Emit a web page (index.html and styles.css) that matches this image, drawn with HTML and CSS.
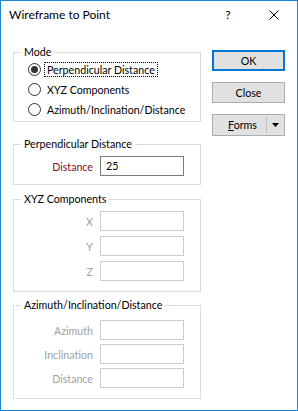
FILE: index.html
```html
<!DOCTYPE html>
<html lang="en">
<head>
    <meta charset="UTF-8">
    <title>Wireframe to Point</title>
    <link rel="stylesheet" href="styles.css">
</head>
<body>
    <div class="window">
        <div class="titlebar">
            <span class="title">Wireframe to Point</span>
            <span class="help">?</span>
            <span class="close">
                <svg width="10" height="10" viewBox="0 0 10 10"><path d="M0.5 0.5L9.5 9.5M9.5 0.5L0.5 9.5" stroke="#000" stroke-width="1"/></svg>
            </span>
        </div>

        <div class="content">
            <div class="groups">
                <fieldset class="group mode">
                    <legend>Mode</legend>
                    <div class="radio first"><span class="dot checked"></span><span class="caption focus">Perpendicular Distance</span></div>
                    <div class="radio"><span class="dot"></span><span class="caption">XYZ Components</span></div>
                    <div class="radio"><span class="dot"></span><span class="caption">Azimuth/Inclination/Distance</span></div>
                </fieldset>

                <fieldset class="group perp">
                    <legend>Perpendicular Distance</legend>
                    <div class="rows">
                        <div class="field"><span class="label required">Distance</span><span class="input">25</span></div>
                    </div>
                </fieldset>

                <fieldset class="group xyz">
                    <legend>XYZ Components</legend>
                    <div class="rows">
                        <div class="field"><span class="label">X</span><span class="input disabled"></span></div>
                        <div class="field"><span class="label">Y</span><span class="input disabled"></span></div>
                        <div class="field"><span class="label">Z</span><span class="input disabled"></span></div>
                    </div>
                </fieldset>

                <fieldset class="group aid">
                    <legend>Azimuth/Inclination/Distance</legend>
                    <div class="rows">
                        <div class="field"><span class="label">Azimuth</span><span class="input disabled"></span></div>
                        <div class="field"><span class="label">Inclination</span><span class="input disabled"></span></div>
                        <div class="field"><span class="label">Distance</span><span class="input disabled"></span></div>
                    </div>
                </fieldset>
            </div>

            <div class="buttons">
                <div class="btn default">OK</div>
                <div class="btn">Close</div>
                <div class="btn split">
                    <span class="main"><u>F</u>orms</span>
                    <span class="sep"></span>
                    <span class="drop">
                        <svg width="7" height="4" viewBox="0 0 7 4"><polygon points="0,0 7,0 3.5,4" fill="#000"/></svg>
                    </span>
                </div>
            </div>
        </div>
    </div>
</body>
</html>
```

FILE: styles.css
```css
* {
    box-sizing: border-box;
}

body {
    margin: 0;
    font-family: Lato, "Liberation Sans", sans-serif;
    font-size: 10.67px;
    color: #000;
    background: #fff;
}

.window {
    width: 298px;
    height: 411px;
    border: 1px solid #1883d7;
    background: #fff;
}

/* title bar */
.titlebar {
    height: 30px;
    display: flex;
    align-items: flex-start;
    font-size: 12px;
}
.title {
    flex: 1;
    margin: 6px 0 0 8px;
    line-height: 16px;
}
.help {
    width: 46px;
    margin-top: 6px;
    line-height: 16px;
    text-align: center;
}
.close {
    width: 46px;
    display: flex;
    justify-content: center;
    padding-top: 9px;
}

/* body */
.content {
    display: flex;
    padding: 13px 12px 0 12px;
}
.groups {
    width: 188px;
}

.group {
    margin: 0;
    padding: 0 7px;
    border: 1px solid #dcdcdc;
}
.group legend {
    padding: 0 3px;
    line-height: 16px;
}
.mode {
    padding-bottom: 2px;
}
.perp {
    margin-top: 14px;
    padding-bottom: 8px;
}
.xyz {
    margin-top: 6px;
    padding-bottom: 10px;
}
.aid {
    margin-top: 5px;
    padding-bottom: 10px;
}

/* radios */
.radio {
    display: flex;
    align-items: center;
    height: 20px;
    padding-left: 7px;
}
.radio.first {
    margin-top: -1px;
}
.dot {
    width: 13px;
    height: 13px;
    border: 1px solid #333;
    border-radius: 50%;
    background: #fff;
    display: flex;
    align-items: center;
    justify-content: center;
}
.dot.checked::after {
    content: "";
    width: 7px;
    height: 7px;
    border-radius: 50%;
    background: #333;
}
.caption {
    margin-left: 3px;
    padding: 0 2px;
    line-height: 13px;
    border: 1px dotted transparent;
}
.caption.focus {
    border-color: #000;
}

/* label + box rows */
.rows {
    display: flex;
    flex-direction: column;
    gap: 5px;
}
.perp .rows,
.xyz .rows {
    margin-top: 4px;
}
.aid .rows {
    margin-top: 7px;
    gap: 4px;
}
.field {
    display: flex;
    align-items: center;
}
.label {
    width: 72px;
    margin-right: 7px;
    text-align: right;
    color: #a0a0a0;
}
.label.required {
    color: #8b1022;
}
.input {
    width: 84px;
    height: 20px;
    border: 1px solid #7a7a7a;
    padding-left: 5px;
    line-height: 18px;
    background: #fff;
}
.input.disabled {
    border-color: #cccccc;
}

/* buttons */
.buttons {
    width: 73px;
    margin-left: 11px;
    margin-top: 6px;
    display: flex;
    flex-direction: column;
    gap: 11px;
}
.btn {
    height: 21px;
    border: 1px solid #adadad;
    background: #e1e1e1;
    text-align: center;
    line-height: 19px;
}
.btn.default {
    border: 2px solid #0078d7;
    line-height: 17px;
}
.btn.split {
    height: 22px;
    display: flex;
    align-items: center;
    line-height: 20px;
}
.split .main {
    flex: 1;
    padding-left: 6px;
}
.split .sep {
    width: 1px;
    height: 16px;
    background: #c4c4c4;
}
.split .drop {
    width: 17px;
    display: flex;
    justify-content: center;
}
```
